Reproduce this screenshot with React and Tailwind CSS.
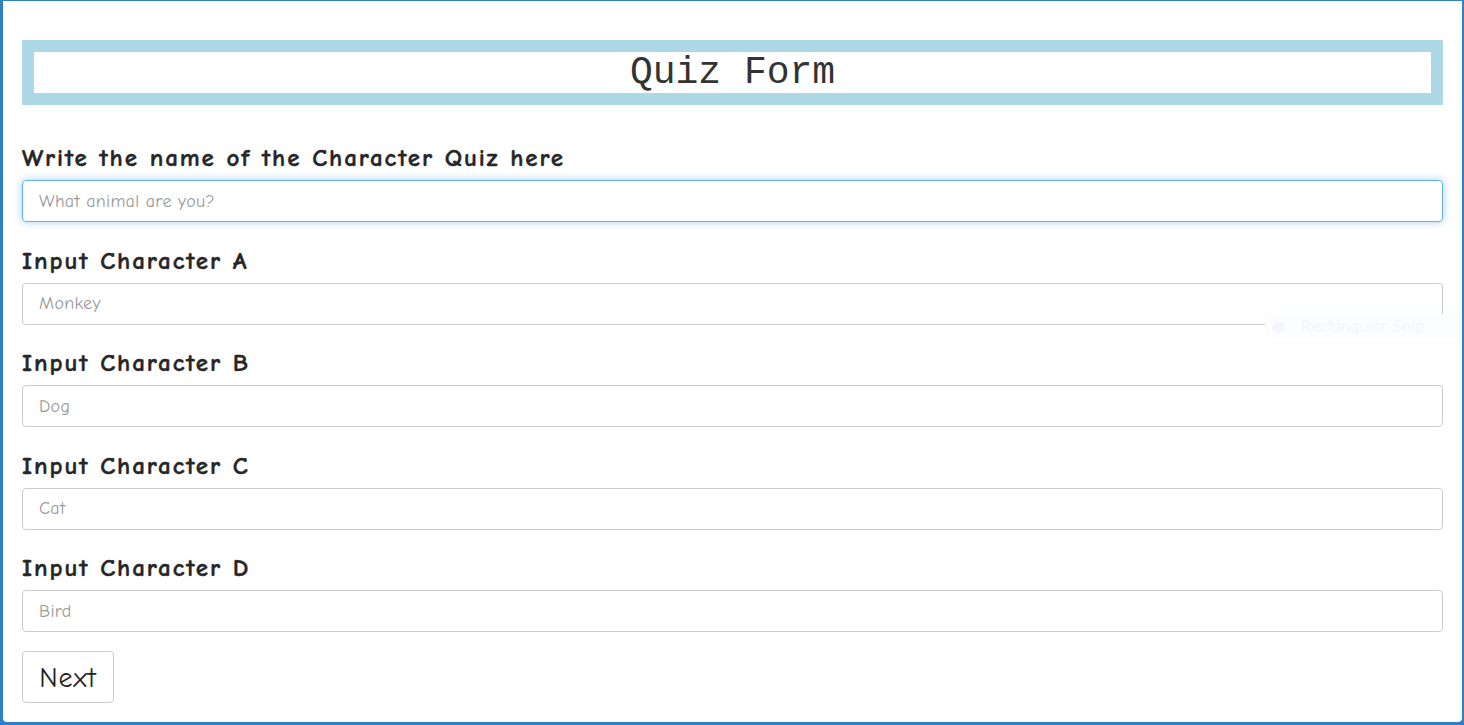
const fields = [
  { label: 'Write the name of the Character Quiz here', placeholder: 'What animal are you?', focused: true },
  { label: 'Input Character A', placeholder: 'Monkey' },
  { label: 'Input Character B', placeholder: 'Dog' },
  { label: 'Input Character C', placeholder: 'Cat' },
  { label: 'Input Character D', placeholder: 'Bird' },
];

const comic = { fontFamily: '"Comic Sans MS", "Comic Neue", "Noto Sans", "Open Sans", sans-serif' };

export default function App() {
  return (
    <div className="h-[725px] w-[1464px] overflow-hidden bg-[#2f7fc9]">
      <div
        className="relative h-[721px] ml-[3px] mr-[2px] mt-px rounded-b-[4px] bg-white px-[19px] pt-[39px] text-[#262626]"
        style={comic}
      >
        <div className="border-[12px] border-[#add8e6] bg-white">
          <h1
            className="h-[41px] text-center text-[38px] leading-[41px] text-[#333]"
            style={{ fontFamily: '"Liberation Mono", "Courier New", monospace' }}
          >
            Quiz Form
          </h1>
        </div>

        <form className="mt-[35px]" onSubmit={(e) => e.preventDefault()}>
          {fields.map((f) => (
            <div key={f.label} className="mb-[20.5px]">
              <label className="mb-[5px] block text-[25px] font-bold leading-[35px] tracking-[1.9px] [-webkit-text-stroke:0.4px_#262626]">
                {f.label}
              </label>
              <input
                type="text"
                placeholder={f.placeholder}
                className={
                  f.focused
                    ? 'block h-[42px] w-full rounded-[4px] border border-[#66afe9] px-4 text-[18px] tracking-[0.3px] outline-none shadow-[0_0_8px_rgba(102,175,233,0.6)] placeholder:text-[#999]'
                    : 'block h-[42px] w-full rounded-[4px] border border-[#ccc] px-4 text-[18px] tracking-[0.3px] outline-none placeholder:text-[#999]'
                }
                style={comic}
              />
            </div>
          ))}
          <button
            type="submit"
            className="-mt-[2px] h-[52px] w-[92px] rounded-[4px] border border-[#ccc] bg-white pt-[3px] text-[28px] tracking-[1px] text-[#222]"
            style={comic}
          >
            Next
          </button>
        </form>

        <div className="absolute left-[1262px] top-[313px] flex h-[25px] w-[195px] items-center gap-4 bg-[#fcfdfe] px-2 text-[17px] text-[#f1f4f8]">
          <span className="h-[12px] w-[12px] rounded-full bg-[#f3f6fa]" />
          <span>Rectangular Snip</span>
        </div>
      </div>
    </div>
  );
}
